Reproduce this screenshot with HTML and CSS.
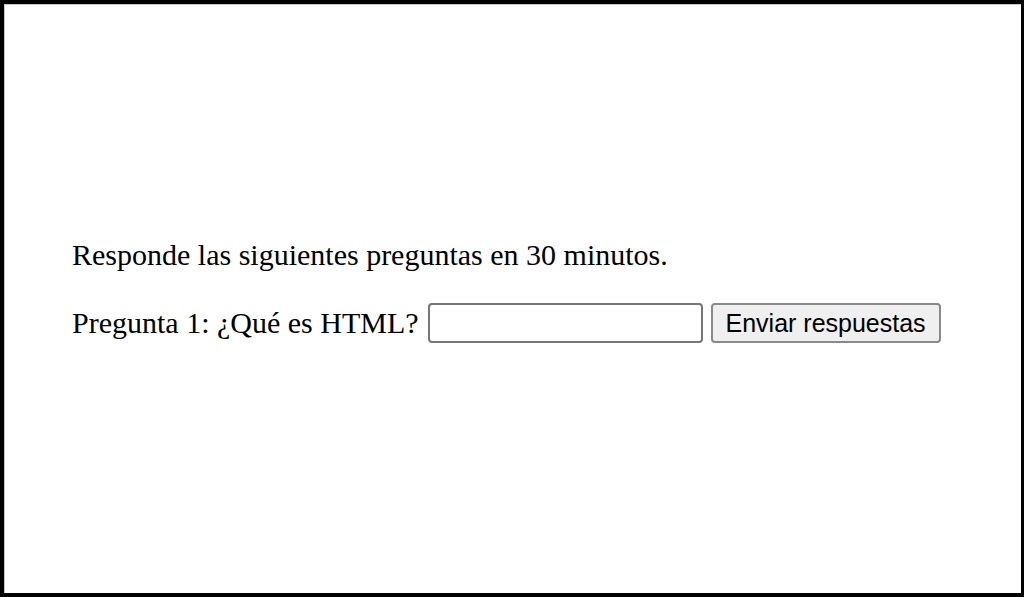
FILE: index.html
```html
<!DOCTYPE html>
<html lang="es">
<head>
<meta charset="utf-8">
<link rel="stylesheet" href="styles.css">
</head>
<body>
<div class="frame">
  <div class="content">
    <p class="intro">Responde las siguientes preguntas en 30 minutos.</p>
    <form class="question">
      <label for="q1">Pregunta 1: ¿Qué es HTML?</label>
      <input id="q1" type="text" class="answer">
      <button type="button" class="submit">Enviar respuestas</button>
    </form>
  </div>
</div>
</body>
</html>
```
FILE: styles.css
```css
html, body {
  margin: 0;
  padding: 0;
  background: #000;
}
.frame {
  box-sizing: border-box;
  width: 1024px;
  height: 597px;
  border-style: solid;
  border-color: #000;
  border-width: 4px 3px 4px 4px;
  background: #fff;
}
.content {
  box-sizing: border-box;
  height: 100%;
  border-top: 1px solid #c8c8c8;
  border-left: 1px solid #c8c8c8;
  padding: 233px 0 0 67px;
  font-family: "Liberation Serif", "Times New Roman", serif;
  font-size: 30px;
  color: #000;
}
.intro {
  margin: 0 0 31px 0;
  line-height: 34px;
}
.question {
  display: flex;
  align-items: center;
  margin: 0;
  line-height: 34px;
}
.question label {
  margin-right: 9px;
}
.answer {
  box-sizing: border-box;
  width: 275px;
  height: 40px;
  margin: 0 8px 0 0;
  border: 2px solid #767676;
  border-radius: 4px;
  background: #fff;
  padding: 2px 4px;
}
.submit {
  box-sizing: border-box;
  height: 40px;
  width: 230px;
  margin: 0;
  padding: 0 10px;
  border: 2px solid #8a8a8a;
  border-radius: 4px;
  background: #efefef;
  font-family: "Liberation Sans", Arial, sans-serif;
  font-size: 25px;
  color: #000;
}
```
